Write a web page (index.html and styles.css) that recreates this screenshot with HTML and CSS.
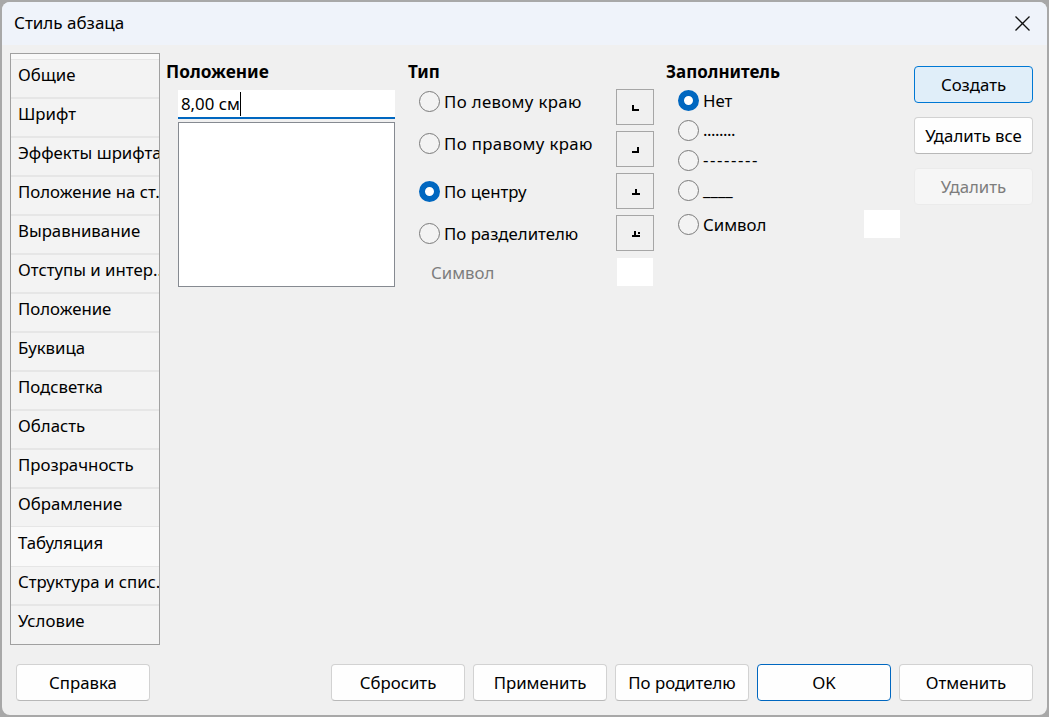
FILE: index.html
```html
<!DOCTYPE html>
<html lang="ru">
<head>
    <meta charset="UTF-8">
    <meta name="viewport" content="width=device-width, initial-scale=1.0">
    <title>Стиль абзаца</title>
    <link rel="stylesheet" href="styles.css">
</head>
<body>
    <div class="dialog">
        <div class="titlebar">
            <span class="title">Стиль абзаца</span>
            <svg class="close-icon" width="15" height="15" viewBox="0 0 15 15">
                <path d="M0.5 0.5L14.5 14.5M14.5 0.5L0.5 14.5" stroke="#111" stroke-width="1.3" fill="none"/>
            </svg>
        </div>

        <div class="content">
            <!-- список вкладок -->
            <ul class="tabs">
                <li>Общие</li>
                <li>Шрифт</li>
                <li>Эффекты шрифта</li>
                <li>Положение на ст.</li>
                <li>Выравнивание</li>
                <li>Отступы и интер..</li>
                <li>Положение</li>
                <li>Буквица</li>
                <li>Подсветка</li>
                <li>Область</li>
                <li>Прозрачность</li>
                <li>Обрамление</li>
                <li class="active">Табуляция</li>
                <li>Структура и спис.</li>
                <li>Условие</li>
            </ul>

            <div class="col-position">
                <h3>Положение</h3>
                <div class="pos-input"><span>8,00 см</span><i class="caret"></i></div>
                <div class="pos-list"></div>
            </div>

            <div class="col-type">
                <h3>Тип</h3>
                <div class="type-rows">
                    <div class="type-row">
                        <div class="type-opt opt-high"><span class="radio"></span><span>По левому краю</span></div>
                        <span class="tab-btn"><svg width="10" height="8" viewBox="0 0 10 8"><path d="M2 2h2v4h5v2H2z"/></svg></span>
                    </div>
                    <div class="type-row">
                        <div class="type-opt opt-high"><span class="radio"></span><span>По правому краю</span></div>
                        <span class="tab-btn"><svg width="10" height="8" viewBox="0 0 10 8"><path d="M7 2h2v6H2V6h5z"/></svg></span>
                    </div>
                    <div class="type-row">
                        <div class="type-opt"><span class="radio checked"></span><span>По центру</span></div>
                        <span class="tab-btn"><svg width="10" height="8" viewBox="0 0 10 8"><path d="M5 2h2v4h3v2H2V6h3z"/></svg></span>
                    </div>
                    <div class="type-row">
                        <div class="type-opt"><span class="radio"></span><span>По разделителю</span></div>
                        <span class="tab-btn"><svg width="10" height="8" viewBox="0 0 10 8"><path d="M4 2h2v4h4v2H2V6h2zM8 3h2v2H8z"/></svg></span>
                    </div>
                </div>
                <div class="symbol-row">
                    <span>Символ</span>
                    <span class="char-box"></span>
                </div>
            </div>

            <div class="col-fill">
                <h3>Заполнитель</h3>
                <div class="fill-rows">
                    <div class="fill-row"><span class="radio checked"></span><span>Нет</span></div>
                    <div class="fill-row"><span class="radio"></span><span class="leader leader-dot">........</span></div>
                    <div class="fill-row"><span class="radio"></span><span class="leader leader-dash">--------</span></div>
                    <div class="fill-row"><span class="radio"></span><span class="leader">____</span></div>
                    <div class="fill-row fill-symbol"><span class="radio"></span><span>Символ</span><span class="char-box"></span></div>
                </div>
            </div>

            <div class="col-actions">
                <button class="btn btn-hot">Создать</button>
                <button class="btn">Удалить все</button>
                <button class="btn btn-off">Удалить</button>
            </div>
        </div>

        <div class="footer">
            <button class="btn btn-wide">Справка</button>
            <div class="footer-right">
                <button class="btn btn-wide">Сбросить</button>
                <button class="btn btn-wide">Применить</button>
                <button class="btn btn-wide">По родителю</button>
                <button class="btn btn-wide btn-default">OK</button>
                <button class="btn btn-wide">Отменить</button>
            </div>
        </div>
    </div>
</body>
</html>
```

FILE: styles.css
```css
* {
    box-sizing: border-box;
}
html, body {
    height: 100%;
}
body {
    margin: 0;
    padding: 2px;
    background-color: #a8a8a8;
    font-family: 'Noto Sans', sans-serif;
    font-size: 16.8px;
    color: #000;
    overflow: hidden;
}
h3 {
    margin: 0;
    font-size: 17px;
    font-weight: bold;
    line-height: 22px;
}
.dialog {
    height: 713px;
    display: flex;
    flex-direction: column;
    background-color: #f0f0f0;
    border-radius: 8px;
    overflow: hidden;
}
.titlebar {
    height: 43px;
    flex: none;
    display: flex;
    align-items: center;
    justify-content: space-between;
    padding: 0 17px 0 12px;
    background-color: #eff3fa;
}
.title {
    font-size: 17px;
    padding-bottom: 2px;
}
.content {
    flex: 1;
    display: flex;
    padding: 8px 14px 0 8px;
}
.tabs {
    width: 150px;
    height: 592px;
    flex: none;
    margin: 0;
    padding: 5px 0 0;
    list-style: none;
    overflow: hidden;
    background-color: #f9f9f9;
    border: 1px solid #a0a0a0;
}
.tabs li {
    height: 39px;
    padding-left: 7px;
    line-height: 29px;
    white-space: nowrap;
    overflow: hidden;
    background-color: #f3f3f3;
    border-top: 1px solid #e6e6e6;
    border-bottom: 1px solid #e6e6e6;
}
.tabs li.active {
    background-color: #f9f9f9;
    border-color: #f9f9f9;
}
.tabs li:last-child {
    border-bottom: 0;
}
.col-position {
    width: 248px;
    padding: 8px 0 0 6px;
}
.col-position h3 {
    font-size: 17.3px;
}
.pos-input {
    margin: 7px 0 0 12px;
    width: 217px;
    height: 29px;
    padding-left: 3px;
    display: flex;
    align-items: center;
    background-color: #fff;
    border-bottom: 2px solid #0067c0;
}
.caret {
    width: 1px;
    height: 24px;
    background-color: #000;
}
.pos-list {
    margin: 3px 0 0 12px;
    width: 217px;
    height: 165px;
    background-color: #fff;
    border: 1px solid #868a91;
}
.col-type {
    width: 258px;
    padding-top: 8px;
}
.type-rows {
    margin: 6px 0 0 11px;
    display: flex;
    flex-direction: column;
    gap: 6px;
}
.type-row {
    display: flex;
    align-items: center;
    height: 36px;
}
.type-opt {
    width: 197px;
    display: flex;
    align-items: center;
    gap: 4px;
}
.opt-high {
    padding-bottom: 12px;
    letter-spacing: 0.35px;
}
.tab-btn {
    width: 38px;
    height: 36px;
    display: flex;
    align-items: center;
    justify-content: center;
    border: 1px solid #a6a6a6;
}
.tab-btn svg {
    display: block;
}
.symbol-row {
    width: 222px;
    margin: 7px 0 0 23px;
    display: flex;
    align-items: center;
    justify-content: space-between;
    color: #7d7d7d;
}
.char-box {
    width: 36px;
    height: 28px;
    background-color: #fff;
}
.radio {
    width: 21px;
    height: 21px;
    flex: none;
    border-radius: 50%;
    border: 1px solid #7a7a7a;
    background-color: #f3f3f3;
}
.radio.checked {
    border: 6px solid #0067c0;
    background-color: #fff;
}
.col-fill {
    width: 248px;
    padding-top: 8px;
}
.fill-rows {
    margin: 2px 0 0 12px;
    width: 222px;
}
.fill-row {
    display: flex;
    align-items: center;
    gap: 4px;
    height: 30px;
}
.fill-symbol {
    height: 28px;
    margin-top: 5px;
}
.fill-symbol .char-box {
    margin-left: auto;
}
.leader {
    margin-top: -2px;
}
.leader-dot {
    letter-spacing: -0.5px;
}
.leader-dash {
    letter-spacing: 1.6px;
}
.col-actions {
    padding-top: 13px;
    display: flex;
    flex-direction: column;
    gap: 14px;
}
.btn {
    width: 119px;
    height: 37px;
    padding: 0;
    font-family: inherit;
    font-size: 16.8px;
    color: #000;
    background-color: #fefefe;
    border: 1px solid #d2d2d2;
    border-bottom-color: #b8b8b8;
    border-radius: 4px;
}
.btn-hot {
    background-color: #e0eef9;
    border: 1px solid #0078d4;
}
.btn-off {
    color: #7d7d7d;
    background-color: #f6f6f6;
    border-color: #ebebeb;
}
.footer {
    height: 51px;
    flex: none;
    display: flex;
    justify-content: space-between;
    padding: 0 14px;
}
.footer-right {
    display: flex;
    gap: 8px;
}
.btn-wide {
    width: 134px;
}
.btn-default {
    border: 1px solid #0067c0;
}
```
